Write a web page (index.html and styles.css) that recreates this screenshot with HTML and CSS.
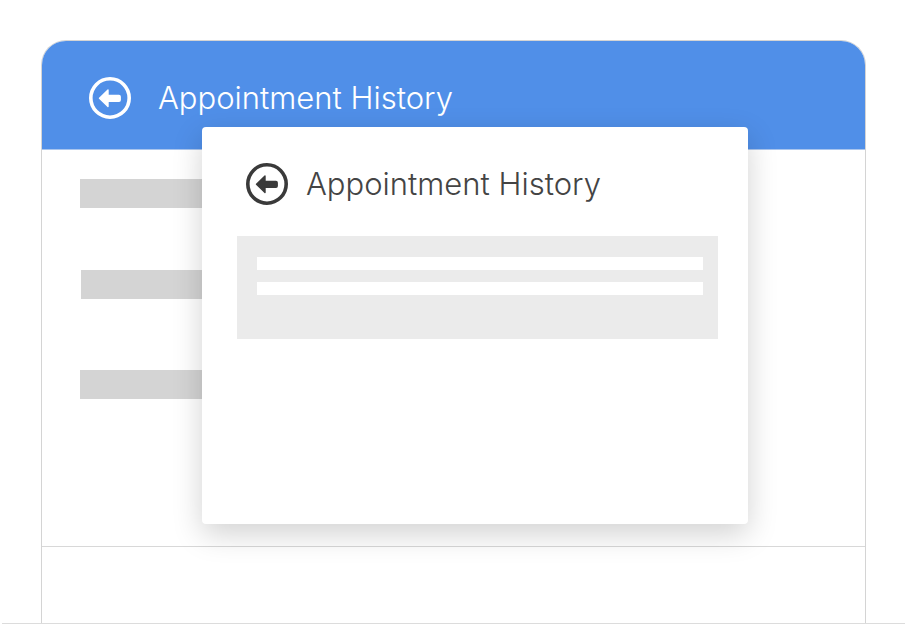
FILE: index.html
```html
<!DOCTYPE html>
<html lang="en">
<head>
<meta charset="utf-8">
<title>Appointment History</title>
<link rel="stylesheet" href="styles.css">
</head>
<body>
<div class="stage">
  <section class="card">
    <header class="card-head">
      <svg class="icon" viewBox="0 0 42 42" aria-hidden="true">
        <circle cx="21" cy="21" r="19.2" fill="none" stroke="currentColor" stroke-width="3.6"/>
        <path d="M10.5 21.3 L19 13 V18.5 H30 a1.2 1.2 0 0 1 1.2 1.2 V23.1 a1.2 1.2 0 0 1 -1.2 1.2 H19 V29.6 Z" fill="currentColor" stroke="currentColor" stroke-width="1.4" stroke-linejoin="round"/>
      </svg>
      <h1 class="title">Appointment History</h1>
    </header>
    <div class="card-body">
      <div class="bar"></div>
      <div class="bar bar-b"></div>
      <div class="bar bar-c"></div>
    </div>
    <div class="card-foot"></div>
  </section>
  <section class="modal">
    <header class="modal-head">
      <svg class="icon" viewBox="0 0 42 42" aria-hidden="true">
        <circle cx="21" cy="21" r="19.2" fill="none" stroke="currentColor" stroke-width="3.6"/>
        <path d="M10.5 21.3 L19 13 V18.5 H30 a1.2 1.2 0 0 1 1.2 1.2 V23.1 a1.2 1.2 0 0 1 -1.2 1.2 H19 V29.6 Z" fill="currentColor" stroke="currentColor" stroke-width="1.4" stroke-linejoin="round"/>
      </svg>
      <h2 class="title">Appointment History</h2>
    </header>
    <div class="panel">
      <div class="stripe"></div>
      <div class="stripe"></div>
    </div>
  </section>
</div>
</body>
</html>
```

FILE: styles.css
```css
* { box-sizing: border-box; }
html, body { margin: 0; background: #fff; }
body { height: 633px; overflow: hidden; font-family: Inter, "Liberation Sans", sans-serif; }
.stage {
  position: relative;
  height: 624px;
  margin-left: 2px;
  padding: 40px 0 0 39px;
  border-bottom: 1px solid #dcdcdc;
}
.card {
  display: flex;
  flex-direction: column;
  width: 825px;
  height: 583px;
  border: 1px solid #d4d4d4;
  border-bottom: 0;
  border-radius: 25px 25px 0 0;
  background: #fff;
}
.card-head {
  display: flex;
  flex: none;
  align-items: center;
  gap: 27px;
  height: 109px;
  padding: 5px 0 0 47px;
  background: #508fe8;
  border-bottom: 1px solid #a9c5ee;
  border-radius: 24px 24px 0 0;
  color: #fff;
}
.icon { flex: none; width: 42px; height: 42px; }
.title { margin: 0; font-size: 31px; font-weight: 300; line-height: 36px; white-space: nowrap; }
.card-body {
  display: flex;
  flex: none;
  flex-direction: column;
  height: 396px;
  padding: 29px 0 0 38px;
}
.bar { width: 160px; height: 29px; background: #d4d4d4; }
.bar-b { margin: 62px 0 0 1px; }
.bar-c { margin-top: 71px; }
.card-foot { flex: 1; border-top: 1px solid #d8d8d8; }
.modal {
  position: absolute;
  left: 200px;
  top: 127px;
  width: 546px;
  height: 397px;
  padding: 36px 30px 0 35px;
  background: #fff;
  border-radius: 4px;
  box-shadow: 0 10px 30px rgba(0, 0, 0, 0.18);
}
.modal-head { display: flex; align-items: center; gap: 18px; margin-left: 9px; color: #3a3a3a; height: 42px; }
.modal-head .title { color: #444; }
.panel {
  display: flex;
  flex-direction: column;
  gap: 12px;
  height: 103px;
  margin-top: 31px;
  padding: 21px 15px 0 20px;
  background: #ebebeb;
}
.stripe { height: 13px; background: #fff; }
```
